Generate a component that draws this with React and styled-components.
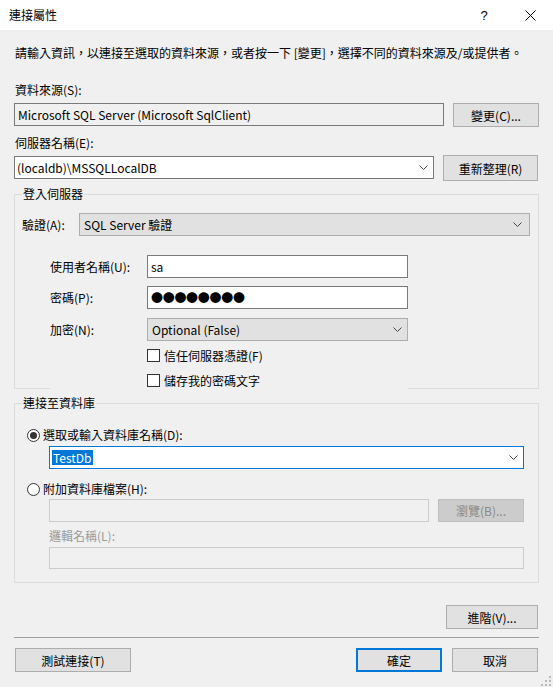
import React from 'react'
import styled, { createGlobalStyle, css } from 'styled-components'

const GlobalStyle = createGlobalStyle`
  html, body {
    margin: 0;
    padding: 0;
  }
  body {
    background: #f0f0f0;
    font-family: "Noto Sans CJK TC", "Noto Sans", sans-serif;
    font-size: 12px;
    color: #000;
  }
`

const Chevron = () => (
  <svg width="9" height="5" viewBox="0 0 9 5">
    <path d="M0.5 0.5 L4.5 4.5 L8.5 0.5" fill="none" stroke="#444" strokeWidth="1" />
  </svg>
)

const CloseIcon = () => (
  <svg width="11" height="11" viewBox="0 0 11 11">
    <path d="M0.5 0.5 L10.5 10.5 M10.5 0.5 L0.5 10.5" stroke="#000" strokeWidth="1" />
  </svg>
)

const GripIcon = () => (
  <svg width="10" height="10" viewBox="0 0 10 10">
    <rect x="8" y="0" width="2" height="2" fill="#b8b8b8" />
    <rect x="8" y="4" width="2" height="2" fill="#b8b8b8" />
    <rect x="4" y="4" width="2" height="2" fill="#b8b8b8" />
    <rect x="8" y="8" width="2" height="2" fill="#b8b8b8" />
    <rect x="4" y="8" width="2" height="2" fill="#b8b8b8" />
    <rect x="0" y="8" width="2" height="2" fill="#b8b8b8" />
  </svg>
)

const ConnectionDialog = () => {
  return (
    <Window>
      <GlobalStyle />
      <TitleBar>
        <TitleText>連接屬性</TitleText>
        <CaptionButton>?</CaptionButton>
        <CaptionButton><CloseIcon /></CaptionButton>
      </TitleBar>

      <Body>
        <Intro>請輸入資訊，以連接至選取的資料來源，或者按一下 [變更]，選擇不同的資料來源及/或提供者。</Intro>

        <FieldLabel top={21}>資料來源(S):</FieldLabel>
        <Row top={5}>
          <TextBox readOnlyBox width={430}>Microsoft SQL Server (Microsoft SqlClient)</TextBox>
          <Button width={86} height={24}>變更(C)...</Button>
        </Row>

        <FieldLabel top={8}>伺服器名稱(E):</FieldLabel>
        <Row top={4}>
          <Combo width={420} offset={1}>
            <span>(localdb)\MSSQLLocalDB</span>
            <Chevron />
          </Combo>
          <Button width={95} height={26} right={1}>重新整理(R)</Button>
        </Row>

        <Group top={5}>
          <Legend>登入伺服器</Legend>
          <AuthRow>
            <AuthLabel>驗證(A):</AuthLabel>
            <Combo dropdown grow pad={7}>
              <span>SQL Server 驗證</span>
              <Chevron />
            </Combo>
          </AuthRow>

          <Credentials>
            <CredRow top={19}>
              <CredLabel>使用者名稱(U):</CredLabel>
              <TextBox width={261}>sa</TextBox>
            </CredRow>
            <CredRow top={8}>
              <CredLabel>密碼(P):</CredLabel>
              <TextBox width={261}><Dots>●●●●●●●●</Dots></TextBox>
            </CredRow>
            <CredRow top={9}>
              <CredLabel>加密(N):</CredLabel>
              <Combo dropdown width={261}>
                <span>Optional (False)</span>
                <Chevron />
              </Combo>
            </CredRow>
            <CheckRow top={2}>
              <CheckBox />
              <span>信任伺服器憑證(F)</span>
            </CheckRow>
            <CheckRow top={1} cover>
              <CheckBox />
              <span>儲存我的密碼文字</span>
            </CheckRow>
          </Credentials>
        </Group>

        <Group top={6} bottom={13}>
          <Legend>連接至資料庫</Legend>
          <RadioRow top={16}>
            <Radio checked />
            <span>選取或輸入資料庫名稱(D):</span>
          </RadioRow>
          <Indent top={3}>
            <Combo width={475} focused>
              <Selected>TestDb</Selected>
              <Chevron />
            </Combo>
          </Indent>
          <RadioRow top={12}>
            <Radio />
            <span>附加資料庫檔案(H):</span>
          </RadioRow>
          <Indent top={2}>
            <FileRow>
              <TextBox disabled width={380} />
              <Button disabled width={86} height={23}>瀏覽(B)...</Button>
            </FileRow>
          </Indent>
          <Indent top={6}>
            <DisabledLabel>邏輯名稱(L):</DisabledLabel>
          </Indent>
          <Indent top={3}>
            <TextBox disabled width={475} height={22} />
          </Indent>
        </Group>

        <AdvancedRow>
          <Button width={92} height={24}>進階(V)...</Button>
        </AdvancedRow>

        <Separator />

        <Footer>
          <Button width={116} height={24} left={1}>測試連接(T)</Button>
          <FooterRight>
            <Button width={86} height={24} primary>確定</Button>
            <Button width={86} height={24} right={1}>取消</Button>
          </FooterRight>
        </Footer>
      </Body>

      <Grip><GripIcon /></Grip>
    </Window>
  )
}

export default ConnectionDialog

const Window = styled.div`
  width: 553px;
  height: 687px;
  position: relative;
  display: flex;
  flex-direction: column;
  background: #f0f0f0;
  overflow: hidden;
`

const TitleBar = styled.div`
  height: 30px;
  background: #fff;
  display: flex;
  align-items: center;
  padding-left: 9px;
  flex-shrink: 0;
`

const TitleText = styled.div`
  flex: 1;
  line-height: 16px;
`

const CaptionButton = styled.div`
  width: 46px;
  height: 30px;
  display: flex;
  align-items: center;
  justify-content: center;
  font-family: "Liberation Sans", sans-serif;
  font-size: 13px;
`

const Body = styled.div`
  display: flex;
  flex-direction: column;
  padding: 0 14px;
`

const Intro = styled.div`
  margin-top: 15px;
  padding-left: 1px;
  line-height: 16px;
  white-space: nowrap;
`

const FieldLabel = styled.div`
  margin-top: ${p => p.top}px;
  padding-left: 1px;
  line-height: 16px;
`

const Row = styled.div`
  margin-top: ${p => p.top}px;
  display: flex;
  align-items: flex-start;
  justify-content: space-between;
`

const TextBox = styled.div`
  box-sizing: border-box;
  width: ${p => p.width}px;
  height: ${p => p.height || 23}px;
  border: 1px solid ${p => (p.disabled ? '#cccccc' : '#7a7a7a')};
  background: ${p => (p.readOnlyBox || p.disabled ? '#f0f0f0' : '#fff')};
  padding-left: 3px;
  display: flex;
  align-items: center;
  white-space: nowrap;
  overflow: hidden;
`

const Dots = styled.span`
  font-size: 12px;
  letter-spacing: -0.3px;
`

const Combo = styled.div`
  box-sizing: border-box;
  ${p => (p.grow ? 'flex: 1;' : `width: ${p.width}px;`)}
  height: 23px;
  margin-top: ${p => p.offset || 0}px;
  border: 1px solid ${p => (p.focused ? '#0078d7' : p.dropdown ? '#adadad' : '#7a7a7a')};
  background: ${p => (p.dropdown ? '#e1e1e1' : '#fff')};
  display: flex;
  align-items: center;
  justify-content: space-between;
  padding: 0 ${p => p.pad || 5}px 0 ${p => (p.dropdown ? 4 : 2)}px;
  white-space: nowrap;

  svg {
    flex-shrink: 0;
  }
`

const Selected = styled.span`
  background: #0078d7;
  color: #fff;
  line-height: 15px;
  padding: 0 1px;
`

const Button = styled.div`
  box-sizing: border-box;
  width: ${p => p.width}px;
  height: ${p => p.height}px;
  margin-left: ${p => p.left || 0}px;
  margin-right: ${p => p.right || 0}px;
  display: flex;
  align-items: center;
  justify-content: center;
  background: ${p => (p.disabled ? '#cccccc' : '#e1e1e1')};
  border: ${p => (p.primary ? '2px solid #0078d7' : `1px solid ${p.disabled ? '#bfbfbf' : '#adadad'}`)};
  color: ${p => (p.disabled ? '#8a8a8a' : '#000')};
  white-space: nowrap;
`

const Group = styled.fieldset`
  margin: ${p => p.top}px 0 0;
  padding: 0 8px ${p => p.bottom || 0}px 7px;
  min-width: 0;
  border: 1px solid #dcdcdc;
`

const Legend = styled.legend`
  padding: 0 1px;
  line-height: 16px;
`

const AuthRow = styled.div`
  margin-top: 11px;
  display: flex;
  align-items: center;
`

const AuthLabel = styled.div`
  width: 57px;
  line-height: 16px;
`

const Credentials = styled.div`
  margin-left: 28px;
  display: flex;
  flex-direction: column;
`

const CredRow = styled.div`
  margin-top: ${p => p.top}px;
  display: flex;
  align-items: center;
`

const CredLabel = styled.div`
  width: 97px;
  line-height: 16px;
`

const CheckRow = styled.div`
  margin-top: ${p => p.top}px;
  width: 358px;
  height: 24px;
  box-sizing: border-box;
  padding-left: 97px;
  display: flex;
  align-items: center;
  gap: 4px;
  ${p => p.cover && css`
    position: relative;
    background: #f0f0f0;
    margin-bottom: -4px;
  `}
`

const CheckBox = styled.span`
  box-sizing: border-box;
  width: 13px;
  height: 13px;
  border: 1px solid #333;
  background: #fff;
  flex-shrink: 0;
`

const RadioRow = styled.div`
  margin-top: ${p => p.top}px;
  margin-left: 5px;
  display: flex;
  align-items: center;
  gap: 3px;
  line-height: 16px;
`

const Radio = styled.span`
  box-sizing: border-box;
  width: 13px;
  height: 13px;
  border: 1px solid #333;
  border-radius: 50%;
  background: #fff;
  display: flex;
  align-items: center;
  justify-content: center;
  flex-shrink: 0;

  &::after {
    content: '';
    width: 7px;
    height: 7px;
    border-radius: 50%;
    background: ${p => (p.checked ? '#333' : 'transparent')};
  }
`

const Indent = styled.div`
  margin-top: ${p => p.top}px;
  margin-left: 27px;
`

const FileRow = styled.div`
  width: 475px;
  display: flex;
  justify-content: space-between;
`

const DisabledLabel = styled.div`
  line-height: 16px;
  color: #9a9a9a;
`

const AdvancedRow = styled.div`
  margin-top: 22px;
  display: flex;
  justify-content: flex-end;
  padding-right: 1px;
`

const Separator = styled.div`
  margin-top: 8px;
  height: 1px;
  background: #a0a0a0;
`

const Footer = styled.div`
  margin-top: 10px;
  display: flex;
  justify-content: space-between;
`

const FooterRight = styled.div`
  display: flex;
  gap: 10px;
`

const Grip = styled.div`
  position: absolute;
  right: 2px;
  bottom: 1px;
  width: 10px;
  height: 10px;
  display: flex;
`
